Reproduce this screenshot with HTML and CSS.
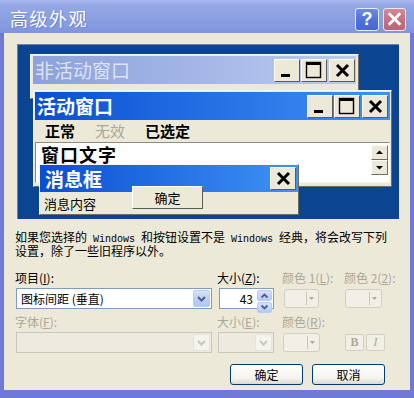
FILE: index.html
```html
<!DOCTYPE html>
<html lang="zh-CN">
<head>
<meta charset="utf-8">
<title>高级外观</title>
<link rel="stylesheet" href="styles.css">
</head>
<body>
<div class="window">
  <div class="titlebar">
    <span class="title">高级外观</span>
    <div class="tb-buttons">
      <span class="tb-btn help">?</span>
      <span class="tb-btn close"><svg width="22" height="21" viewBox="0 0 22 21"><path d="M6 5 L16 15 M16 5 L6 15" stroke="#fff" stroke-width="3" stroke-linecap="square"/></svg></span>
    </div>
  </div>
  <div class="frame">
    <div class="client">
      <div class="preview">
        <div class="win inactive">
          <div class="cap cap-inactive">
            <span class="cap-text">非活动窗口</span>
            <div class="cap-btns">
              <span class="cbtn"><svg width="26" height="23" viewBox="0 0 26 23"><rect x="7" y="15" width="9" height="3" fill="#000"/></svg></span>
              <span class="cbtn"><svg width="26" height="23" viewBox="0 0 26 23"><rect x="5.5" y="3.5" width="14" height="15" fill="none" stroke="#000" stroke-width="1.4"/><rect x="5" y="3" width="15" height="3" fill="#000"/></svg></span>
              <span class="cbtn gap"><svg width="26" height="23" viewBox="0 0 26 23"><path d="M8 6 L19 17 M19 6 L8 17" stroke="#000" stroke-width="3"/></svg></span>
            </div>
          </div>
        </div>
        <div class="win active">
          <div class="cap cap-active">
            <span class="cap-text bold">活动窗口</span>
            <div class="cap-btns">
              <span class="cbtn"><svg width="26" height="23" viewBox="0 0 26 23"><rect x="7" y="15" width="9" height="3" fill="#000"/></svg></span>
              <span class="cbtn"><svg width="26" height="23" viewBox="0 0 26 23"><rect x="5.5" y="3.5" width="14" height="15" fill="none" stroke="#000" stroke-width="1.4"/><rect x="5" y="3" width="15" height="3" fill="#000"/></svg></span>
              <span class="cbtn gap"><svg width="26" height="23" viewBox="0 0 26 23"><path d="M8 6 L19 17 M19 6 L8 17" stroke="#000" stroke-width="3"/></svg></span>
            </div>
          </div>
          <div class="menubar">
            <span class="mi">正常</span><span class="mi dis">无效</span><span class="mi">已选定</span>
          </div>
          <div class="textarea">
            <span class="wtext">窗口文字</span>
            <div class="vscroll">
              <span class="sbtn"><svg width="15" height="13" viewBox="0 0 15 13"><path d="M4 8 L11 8 L7.5 4.5 Z" fill="#000"/></svg></span>
              <span class="sbtn"><svg width="15" height="13" viewBox="0 0 15 13"><path d="M4 5 L11 5 L7.5 8.5 Z" fill="#000"/></svg></span>
            </div>
          </div>
        </div>
        <div class="msgbox">
          <div class="cap cap-msg">
            <span class="cap-text bold">消息框</span>
            <span class="cbtn"><svg width="26" height="23" viewBox="0 0 26 23"><path d="M8 6 L19 17 M19 6 L8 17" stroke="#000" stroke-width="3"/></svg></span>
          </div>
          <div class="msgbody">
            <span class="msgtext">消息内容</span>
            <span class="msgok">确定</span>
          </div>
        </div>
      </div>

      <div class="desc">
        <p class="dline">如果您选择的<span class="mono"> Windows </span>和按钮设置不是<span class="mono"> Windows </span>经典，将会改写下列</p>
        <p class="dline">设置，除了一些旧程序以外。</p>
      </div>

      <div class="controls">
        <span class="lbl">项目(<u>I</u>):</span>
        <span class="lbl">大小(<u>Z</u>):</span>
        <span class="lbl dim">颜色 1(<u>L</u>):</span>
        <span class="lbl dim">颜色 2(<u>2</u>):</span>

        <div class="combo">
          <span class="combo-text">图标间距 (垂直)</span>
          <span class="drop"><svg width="15" height="17" viewBox="0 0 15 17"><path d="M4 7 L7.5 10.5 L11 7" fill="none" stroke="#4D6185" stroke-width="2"/></svg></span>
        </div>
        <div class="spin">
          <span class="spin-val">43</span>
          <span class="spin-btns">
            <span class="sp"><svg width="13" height="9" viewBox="0 0 13 9"><path d="M3.5 6.5 L6.5 3.5 L9.5 6.5" fill="none" stroke="#4D6185" stroke-width="1.8"/></svg></span>
            <span class="sp"><svg width="13" height="9" viewBox="0 0 13 9"><path d="M3.5 2.5 L6.5 5.5 L9.5 2.5" fill="none" stroke="#4D6185" stroke-width="1.8"/></svg></span>
          </span>
        </div>
        <div class="colorbtn c1"><span class="cb-arrow"><svg width="9" height="9" viewBox="0 0 9 9"><path d="M2 3 L7 3 L4.5 6 Z" fill="#ACA899"/></svg></span></div>
        <div class="colorbtn c2"><span class="cb-arrow"><svg width="9" height="9" viewBox="0 0 9 9"><path d="M2 3 L7 3 L4.5 6 Z" fill="#ACA899"/></svg></span></div>

        <span class="lbl dim">字体(<u>F</u>):</span>
        <span class="lbl dim">大小(<u>E</u>):</span>
        <span class="lbl dim">颜色(<u>R</u>):</span>
        <span></span>

        <div class="combo disabled">
          <span class="combo-text"></span>
          <span class="drop"><svg width="15" height="17" viewBox="0 0 15 17"><path d="M4 7 L7.5 10.5 L11 7" fill="none" stroke="#C9C7BA" stroke-width="2"/></svg></span>
        </div>
        <div class="combo disabled small">
          <span class="combo-text"></span>
          <span class="drop"><svg width="15" height="17" viewBox="0 0 15 17"><path d="M4 7 L7.5 10.5 L11 7" fill="none" stroke="#C9C7BA" stroke-width="2"/></svg></span>
        </div>
        <div class="colorbtn c3"><span class="cb-arrow"><svg width="9" height="9" viewBox="0 0 9 9"><path d="M2 3 L7 3 L4.5 6 Z" fill="#ACA899"/></svg></span></div>
        <div class="fmt">
          <span class="fbtn b">B</span>
          <span class="fbtn i">I</span>
        </div>
      </div>

      <div class="actions">
        <span class="btn">确定</span>
        <span class="btn">取消</span>
      </div>
    </div>
  </div>
</div>
</body>
</html>
```
FILE: styles.css
```css
* { box-sizing: border-box; }
html, body { margin: 0; padding: 0; }
body {
  width: 414px;
  height: 398px;
  overflow: hidden;
  font-family: "Noto Sans CJK SC", "Noto Sans", sans-serif;
  font-size: 12px;
  color: #000;
}
.window {
  width: 414px;
  height: 398px;
  display: flex;
  flex-direction: column;
  background: #7079D6;
}
.titlebar {
  height: 33px;
  flex: none;
  display: flex;
  align-items: center;
  justify-content: space-between;
  padding: 0 8px 0 10px;
  background: linear-gradient(to bottom, #A9B9EC 0%, #93A7E4 18%, #889DE1 70%, #7F94DC 100%);
}
.title {
  color: #fff;
  font-size: 18px;
  line-height: 20px;
  margin-top: 2px;
  letter-spacing: 1.5px;
  text-shadow: 1px 1px 0 #6E82CF;
}
.tb-buttons { display: flex; gap: 4px; margin-top: 6px; }
.tb-btn {
  width: 24px;
  height: 23px;
  border: 1px solid #E8ECF8;
  border-radius: 3px;
  display: flex;
  align-items: center;
  justify-content: center;
}
.help {
  background: linear-gradient(to bottom, #6D8BE0, #4E6FD6 60%, #4868CF);
  color: #fff;
  font-family: "Liberation Sans", sans-serif;
  font-weight: bold;
  font-size: 18px;
}
.close {
  width: 23px;
  background: linear-gradient(to bottom, #D38A95, #C26E7C 60%, #BB6674);
}
.frame {
  flex: 1;
  padding: 0 4px 8px;
}
.client {
  height: 100%;
  background: #ECE9D8;
  padding: 11px 0 0 12px;
}

/* preview */
.preview {
  position: relative;
  margin-left: 1px;
  width: 382px;
  height: 175px;
  background: #0B4592;
  border-top: 1px solid #6C84B4;
  border-left: 1px solid #6C84B4;
}
.win {
  position: absolute;
  background: #ECE9D8;
  border: 1px solid;
  border-color: #F7F6F0 #6F6D63 #6F6D63 #F7F6F0;
}
.inactive { left: 12px; top: 9px; width: 329px; height: 45px; padding: 1px 2px; }
.active { left: 15px; top: 45px; width: 359px; height: 97px; padding: 1px 1px 3px; }
.cap {
  display: flex;
  align-items: center;
  justify-content: space-between;
  height: 28px;
}
.cap-inactive {
  background: linear-gradient(to right, #8DA1DB, #BACBF1);
  padding: 0 1px 0 2px;
}
.cap-active {
  background: linear-gradient(to right, #0A4FD2, #3F92F6);
  padding: 0 2px 0 2px;
}
.cap-text {
  font-size: 19px;
  line-height: 22px;
  color: #DCE3F3;
}
.cap-text.bold { color: #fff; font-weight: bold; }
.cap-btns { display: flex; gap: 1px; }
.cbtn {
  width: 26px;
  height: 23px;
  background: #ECE9D8;
  border: 1px solid;
  border-color: #FFFFFF #5E5C55 #5E5C55 #FFFFFF;
  display: flex;
  align-items: center;
  justify-content: center;
}
.cbtn svg { flex: none; }
.cbtn.gap { margin-left: 1px; }

.menubar {
  height: 22px;
  display: flex;
  align-items: center;
  padding-left: 0;
}
.mi {
  padding: 0 10px;
  font-size: 15px;
  font-weight: bold;
  line-height: 18px;
}
.mi.dis { color: #ACA899; font-weight: normal; }

.textarea {
  height: 41px;
  background: #fff;
  border: 1px solid;
  border-color: #8E8C80 #F7F6F0 #F7F6F0 #8E8C80;
  display: flex;
  justify-content: space-between;
  align-items: flex-start;
  padding: 1px 1px 0 5px;
}
.wtext {
  font-size: 18px;
  font-weight: bold;
  line-height: 21px;
  letter-spacing: 1px;
}
.vscroll { display: flex; flex-direction: column; margin-top: 1px; }
.sbtn {
  width: 17px;
  height: 15px;
  background: #ECE9D8;
  border: 1px solid;
  border-color: #FFFFFF #6F6D63 #6F6D63 #FFFFFF;
  display: flex;
  align-items: center;
  justify-content: center;
}

.msgbox {
  position: absolute;
  left: 21px;
  top: 119px;
  width: 260px;
  height: 51px;
  background: #ECE9D8;
  border: 1px solid;
  border-color: #F7F6F0 #6F6D63 #6F6D63 #F7F6F0;
}
.cap-msg {
  height: 27px;
  background: linear-gradient(to right, #0A4FD2, #3F92F6);
  padding: 0 2px 0 5px;
}
.msgbody {
  height: 22px;
  display: flex;
  align-items: flex-start;
  padding-left: 4px;
}
.msgtext {
  font-size: 13px;
  line-height: 17px;
  margin-top: 3px;
}
.msgok {
  margin-top: -6px;
  margin-left: 36px;
  width: 71px;
  height: 23px;
  background: #ECE9D8;
  border: 1px solid;
  border-color: #FFFFFF #5E5C55 #5E5C55 #FFFFFF;
  display: flex;
  align-items: center;
  justify-content: center;
  font-size: 13px;
}

/* description */
.desc {
  margin: 12px 0 0 -1px;
  font-family: "Liberation Sans", "Noto Sans CJK SC", sans-serif;
  font-size: 12px;
}
.dline {
  margin: 0;
  height: 14px;
  line-height: 14px;
  white-space: nowrap;
}
.mono {
  font-family: "Liberation Mono", monospace;
  font-size: 10px;
  white-space: pre;
}

/* controls */
.controls {
  display: grid;
  grid-template-columns: 202px 65px 62px auto;
  grid-template-rows: 20px 21px 23px 21px;
  margin-top: 9px;
}
.lbl {
  align-self: end;
  margin: 0 0 2px -1px;
  line-height: 16px;
  white-space: nowrap;
}
.lbl.dim { color: #ACA899; }
.lbl u { text-underline-offset: 1px; }

.combo {
  width: 196px;
  height: 21px;
  border: 1px solid #7F9DB9;
  background: #fff;
  display: flex;
  align-items: stretch;
  justify-content: space-between;
  padding: 1px;
}
.combo-text { padding-left: 3px; line-height: 17px; }
.drop {
  width: 17px;
  border-radius: 2px;
  border: 1px solid #B9CBF3;
  background: linear-gradient(to bottom, #D6E2FC, #BCCFF9 50%, #B0C6F6);
  display: flex;
  align-items: center;
  justify-content: center;
}
.combo.disabled {
  border-color: #C9C7BA;
  background: #EDEBE0;
}
.combo.disabled .drop {
  border-color: #E6E4DA;
  background: #F4F3EE;
}
.combo.small { width: 56px; }

.spin {
  width: 55px;
  height: 21px;
  margin-left: 1px;
  border: 1px solid #7F9DB9;
  background: #fff;
  display: flex;
  justify-content: flex-end;
  align-items: stretch;
  padding: 1px;
}
.spin-val { line-height: 17px; padding-right: 4px; }
.spin-btns { display: flex; flex-direction: column; gap: 1px; width: 15px; }
.sp {
  flex: 1;
  border-radius: 2px;
  border: 1px solid #B9CBF3;
  background: linear-gradient(to bottom, #D6E2FC, #B6CAF7);
  display: flex;
  align-items: center;
  justify-content: center;
}
.sp svg { flex: none; }

.colorbtn {
  height: 19px;
  margin-top: 1px;
  border: 1px solid #D2D0C6;
  border-radius: 3px;
  background: #F1EFE6;
  display: flex;
  justify-content: flex-end;
  align-items: center;
  padding: 2px 2px 2px 0;
}
.c1 { width: 35px; margin-left: 1px; }
.c2 { width: 37px; }
.c3 { width: 37px; }
.cb-arrow {
  height: 100%;
  width: 10px;
  border-left: 1px solid #C9C7BA;
  display: flex;
  align-items: center;
  justify-content: center;
}

.fmt { display: flex; gap: 2px; align-items: center; }
.fbtn {
  width: 19px;
  height: 17px;
  border: 1px solid #D2D0C6;
  border-radius: 2px;
  background: #F1EFE6;
  color: #ACA899;
  font-family: "Liberation Serif", serif;
  font-size: 12px;
  display: flex;
  align-items: center;
  justify-content: center;
}
.fbtn.b { font-weight: bold; }
.fbtn.i { font-style: italic; }

.actions {
  display: flex;
  justify-content: flex-end;
  gap: 9px;
  margin-top: 11px;
  padding-right: 25px;
}
.btn {
  width: 73px;
  height: 21px;
  border: 1px solid #003C74;
  border-radius: 3px;
  background: linear-gradient(to bottom, #FFFFFF, #F4F3EE 70%, #DDD8CC);
  display: flex;
  align-items: center;
  justify-content: center;
  font-size: 12px;
}
```
